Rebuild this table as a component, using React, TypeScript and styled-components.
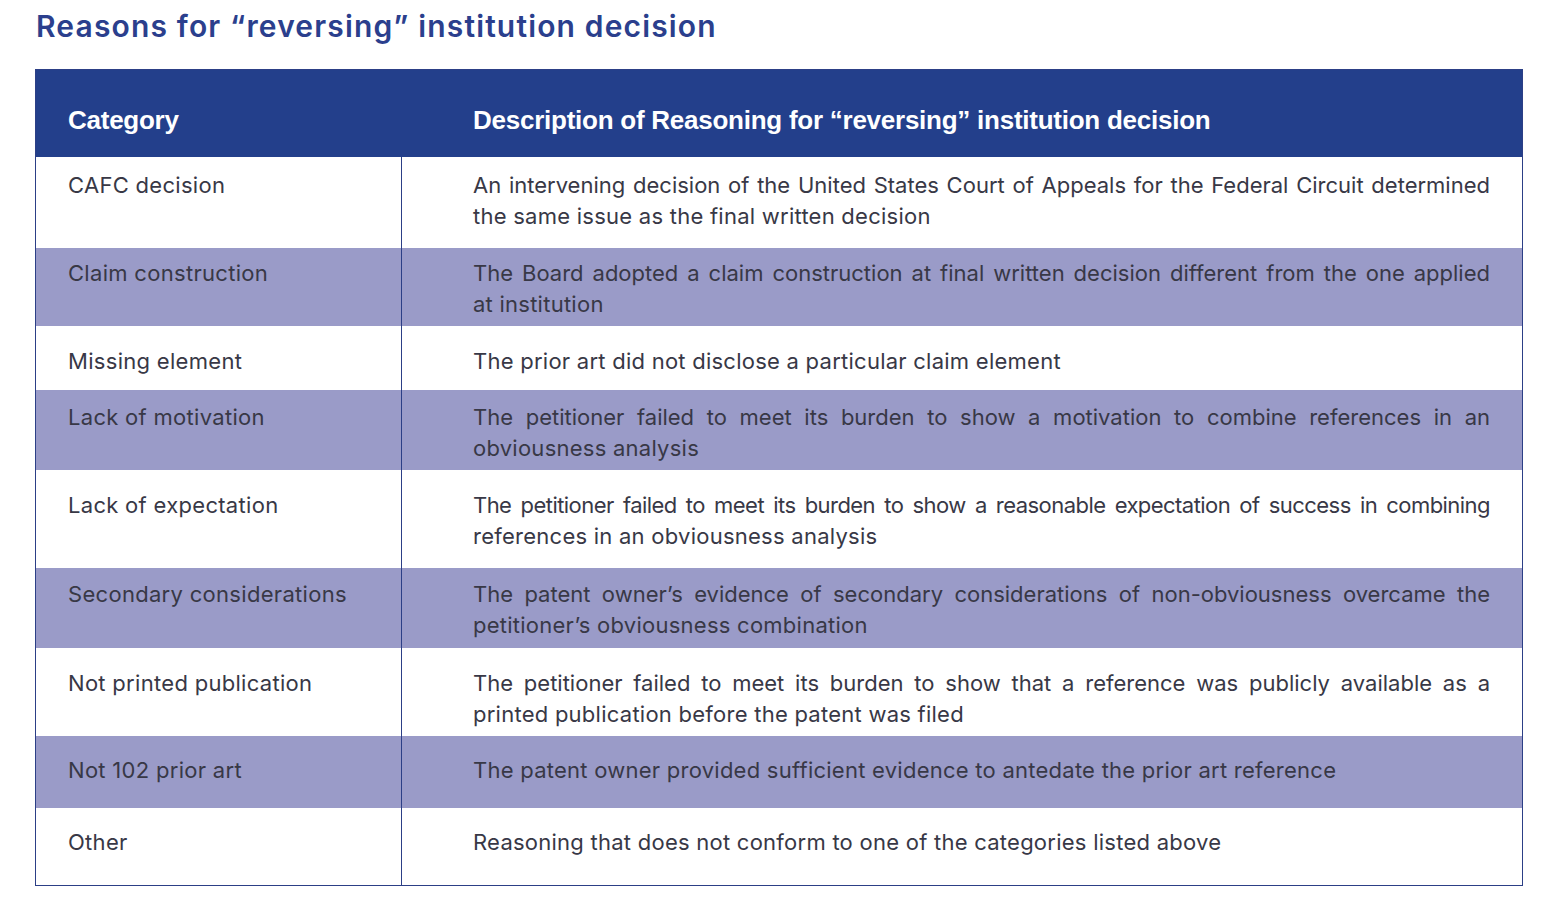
import React from 'react';
import styled, { createGlobalStyle } from 'styled-components';

const GlobalStyle = createGlobalStyle`
  html, body {
    margin: 0;
    padding: 0;
    background: #ffffff;
  }

  body {
    font-family: Inter, 'Open Sans', sans-serif;
  }
`;

interface Reason {
  category: string;
  lines: string[];
  height: number;
  padTop: number;
  tight?: boolean;
}

const reasons: Reason[] = [
  {
    category: 'CAFC decision',
    lines: [
      'An intervening decision of the United States Court of Appeals for the Federal Circuit determined',
      'the same issue as the final written decision',
    ],
    height: 91,
    padTop: 13,
  },
  {
    category: 'Claim construction',
    lines: [
      'The Board adopted a claim construction at final written decision different from the one applied',
      'at institution',
    ],
    height: 78,
    padTop: 10,
  },
  {
    category: 'Missing element',
    lines: ['The prior art did not disclose a particular claim element'],
    height: 64,
    padTop: 20,
  },
  {
    category: 'Lack of motivation',
    lines: [
      'The petitioner failed to meet its burden to show a motivation to combine references in an',
      'obviousness analysis',
    ],
    height: 80,
    padTop: 12,
  },
  {
    category: 'Lack of expectation',
    lines: [
      'The petitioner failed to meet its burden to show a reasonable expectation of success in combining',
      'references in an obviousness analysis',
    ],
    height: 98,
    padTop: 20,
    tight: true,
  },
  {
    category: 'Secondary considerations',
    lines: [
      'The patent owner’s evidence of secondary considerations of non-obviousness overcame the',
      'petitioner’s obviousness combination',
    ],
    height: 80,
    padTop: 11,
  },
  {
    category: 'Not printed publication',
    lines: [
      'The petitioner failed to meet its burden to show that a reference was publicly available as a',
      'printed publication before the patent was filed',
    ],
    height: 88,
    padTop: 20,
  },
  {
    category: 'Not 102 prior art',
    lines: ['The patent owner provided sufficient evidence to antedate the prior art reference'],
    height: 72,
    padTop: 19,
  },
  {
    category: 'Other',
    lines: ['Reasoning that does not conform to one of the categories listed above'],
    height: 77,
    padTop: 19,
  },
];

const Page = styled.div`
  padding: 8px 32px 0 35px;
`;

const Title = styled.h1`
  margin: 0 0 25px 1px;
  font-family: Inter, sans-serif;
  font-weight: 600;
  font-size: 30px;
  line-height: 36px;
  letter-spacing: 1.15px;
  color: #2b3f8d;
`;

const Table = styled.div`
  width: 1488px;
  border: 1px solid #2c3f86;
  box-sizing: border-box;
`;

const HeaderRow = styled.div`
  display: grid;
  grid-template-columns: 366px 1fr;
  height: 87px;
  background: #233f8b;
  align-items: center;
`;

const HeaderCell = styled.div<{ $padLeft: number }>`
  padding-left: ${(props) => props.$padLeft}px;
  padding-top: 13px;
  font-family: 'Liberation Sans', Arial, sans-serif;
  font-weight: 700;
  font-size: 26px;
  color: #ffffff;
  letter-spacing: -0.25px;
`;

const Row = styled.div<{ $shaded: boolean; $height: number }>`
  display: grid;
  grid-template-columns: 366px 1fr;
  height: ${(props) => props.$height}px;
  background: ${(props) => (props.$shaded ? '#9a9bc8' : '#ffffff')};
`;

const CategoryCell = styled.div<{ $padTop: number }>`
  border-right: 1px solid #2c3f86;
  padding: ${(props) => props.$padTop}px 0 0 32px;
  font-size: 22px;
  line-height: 31px;
  letter-spacing: 0.3px;
  color: #383846;
`;

const DescriptionCell = styled.div<{ $padTop: number }>`
  padding: ${(props) => props.$padTop}px 32px 0 71px;
  font-size: 22px;
  line-height: 31px;
  color: #383846;
`;

const Line = styled.div<{ $justify: boolean; $tight?: boolean }>`
  white-space: nowrap;
  text-align: ${(props) => (props.$justify ? 'justify' : 'left')};
  text-align-last: ${(props) => (props.$justify ? 'justify' : 'left')};
  letter-spacing: ${(props) => (props.$tight ? '-0.55px' : props.$justify ? '0' : '0.25px')};
  word-spacing: ${(props) => (props.$tight ? '-2px' : '0')};
`;

const App: React.FC = () => (
  <>
    <GlobalStyle />
    <Page>
      <Title>Reasons for “reversing” institution decision</Title>
      <Table>
        <HeaderRow>
          <HeaderCell $padLeft={32}>Category</HeaderCell>
          <HeaderCell $padLeft={71}>Description of Reasoning for “reversing” institution decision</HeaderCell>
        </HeaderRow>
        {reasons.map((reason, i) => (
          <Row key={reason.category} $shaded={i % 2 === 1} $height={reason.height}>
            <CategoryCell $padTop={reason.padTop}>{reason.category}</CategoryCell>
            <DescriptionCell $padTop={reason.padTop}>
              {reason.lines.map((line, j) => (
                <Line
                  key={line}
                  $justify={j < reason.lines.length - 1}
                  $tight={reason.tight && j === 0}
                >
                  {line}
                </Line>
              ))}
            </DescriptionCell>
          </Row>
        ))}
      </Table>
    </Page>
  </>
);

export default App;
